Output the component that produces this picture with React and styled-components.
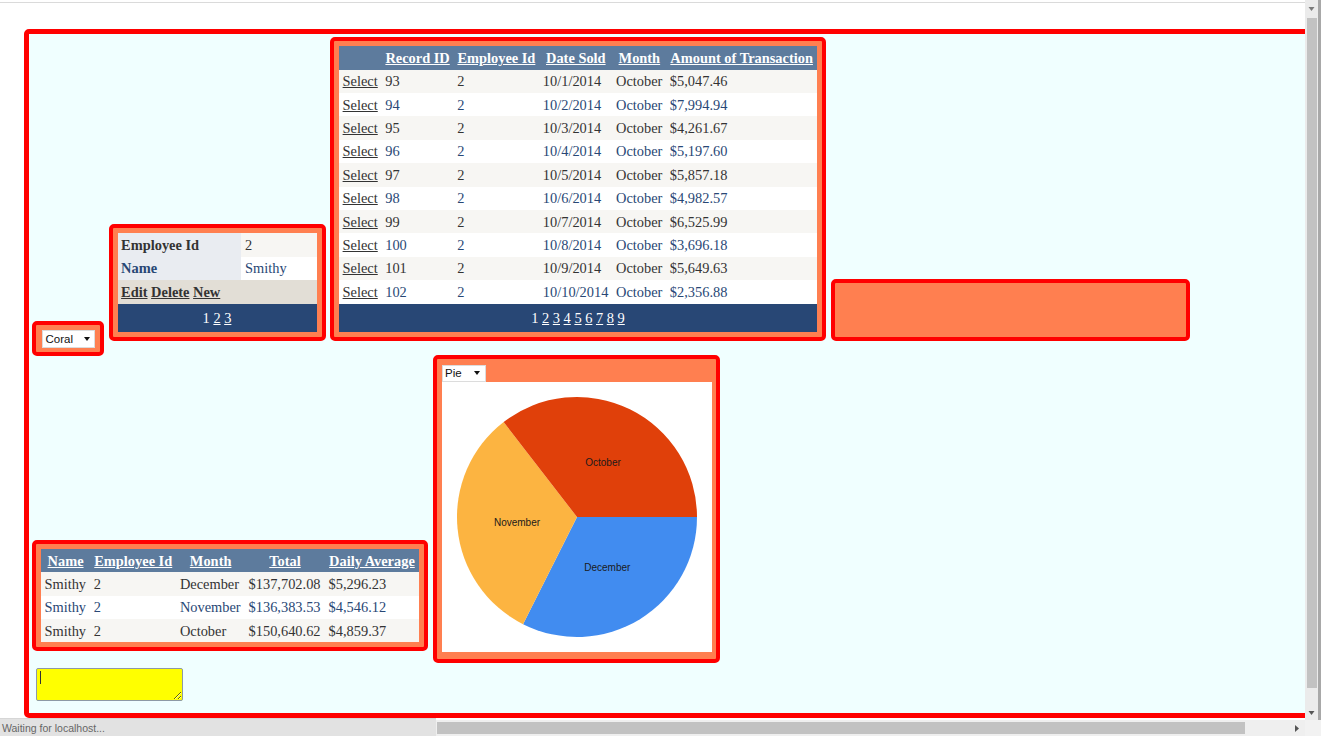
import React from 'react';
import styled, { createGlobalStyle } from 'styled-components';

const GlobalStyle = createGlobalStyle`
  html, body {
    margin: 0;
    padding: 0;
  }
  body {
    width: 1321px;
    height: 736px;
    overflow: hidden;
    background: #fff;
    font-family: "Liberation Serif", "Times New Roman", serif;
  }
`;

// Browser frame
const Screen = styled.div`
  position: relative;
  width: 1321px;
  height: 736px;
  display: grid;
  grid-template-columns: 1305px 16px;
  grid-template-rows: 720px 16px;
  overflow: hidden;
  background: #fff;
`;

const Viewport = styled.div`
  overflow: hidden;
  background: #fff;
  margin-top: 2px;
  border-top: 1px solid #dadada;
  padding: 25.5px 0 0 23.5px;
`;

const VScroll = styled.div`
  display: flex;
  flex-direction: column;
  background: #ebebeb;
  border-right: 3px solid #a8a8a8;
`;

const HScroll = styled.div`
  display: flex;
  align-items: center;
  background: #efefef;
  padding-left: 437px;
`;

const Corner = styled.div`
  background: #f2f2f2;
`;

const ScrollArrow = styled.div`
  flex-shrink: 0;
  width: ${p => p.$w || 13}px;
  height: ${p => p.$h || 17}px;
  display: flex;
  align-items: center;
  justify-content: center;
`;

const VThumb = styled.div`
  width: 10px;
  height: 670px;
  margin-left: 1.5px;
  margin-top: 1px;
  background: #c2c2c2;
`;

const HThumb = styled.div`
  width: 808px;
  height: 12px;
  background: #c2c2c2;
`;

const Filler = styled.div`
  flex: 1;
`;

const StatusBar = styled.div`
  position: absolute;
  left: 0;
  bottom: 0;
  width: 436px;
  height: 18px;
  box-sizing: border-box;
  background: #e2e2e2;
  border-top: 1px solid #d6d6d6;
  display: flex;
  align-items: center;
  padding-left: 2px;
  font-family: "Liberation Sans", Arial, sans-serif;
  font-size: 10.5px;
  color: #666;
`;

// Page
const Page = styled.div`
  box-sizing: border-box;
  width: 1400px;
  height: 689px;
  border: 5px solid #f00;
  border-radius: 5px;
  background: #f0ffff;
  display: flex;
  flex-direction: column;
  align-items: flex-start;
`;

const Row = styled.div`
  display: flex;
  align-items: flex-end;
  gap: ${p => p.$gap || 4.5}px;
  margin-top: ${p => p.$top}px;
  padding-left: ${p => p.$left}px;
`;

const Panel = styled.div`
  box-sizing: border-box;
  flex-shrink: 0;
  border: 4px solid #f00;
  border-radius: 5px;
  background: #ff7f50;
  padding: 5px;
`;

const ColorPanel = styled(Panel)`
  padding: 4.5px 5.5px;
  margin-bottom: -15px;
`;

const BlankPanel = styled(Panel)`
  width: 359px;
  height: 62px;
`;

const BottomPanel = styled(Panel)`
  margin-bottom: 11.7px;
`;

const ChartPanel = styled(Panel)`
  padding: 6px 4px 7.5px 5px;
`;

const Dropdown = styled.div`
  box-sizing: border-box;
  width: ${p => p.$width}px;
  height: ${p => p.$height}px;
  display: flex;
  align-items: center;
  justify-content: space-between;
  padding: 0 ${p => p.$right}px 0 ${p => p.$left}px;
  background: #fff;
  border: 1px solid #dcdcdc;
  font-family: "Liberation Sans", Arial, sans-serif;
  font-size: 11.5px;
  color: #111;
`;

const ChartBox = styled.div`
  width: 270px;
  height: 270px;
  background: #fff;
`;

// Grid tables
const Grid = styled.table`
  border-collapse: collapse;
  border-spacing: 0;
  font-family: "Liberation Serif", "Times New Roman", serif;
  font-size: 14.4px;
  line-height: 16.2px;
  color: #333;
  white-space: nowrap;
  width: ${p => (p.$width ? `${p.$width}px` : 'auto')};
`;

const HeadRow = styled.tr`
  background: #5d7b9d;
  color: #fff;
  font-weight: bold;
`;

const HeadCell = styled.th`
  padding: 3.6px;
  text-align: center;
  font-weight: bold;
`;

const HeadLink = styled.a`
  color: #fff;
  text-decoration: underline;
`;

const DataRow = styled.tr`
  background: ${p => (p.$alt ? '#fff' : '#f7f6f3')};
  color: ${p => (p.$alt ? '#284775' : '#333')};
`;

const Cell = styled.td`
  padding: 3.6px;
  text-align: left;
`;

const FieldCell = styled.td`
  padding: 3.6px;
  width: 116.8px;
  background: #e9ecf1;
  font-weight: bold;
`;

const RowLink = styled.a`
  color: #333;
  text-decoration: underline;
`;

const CommandRow = styled.tr`
  background: #e2ded6;
  color: #333;
  font-weight: bold;
`;

const PagerRow = styled.tr`
  background: #284775;
  color: #fff;
`;

const PagerCell = styled.td`
  padding: 3.6px;
  text-align: center;
`;

const PageList = styled.div`
  display: inline-flex;
  align-items: center;
  gap: 3.6px;
  height: 21.4px;
  vertical-align: top;
`;

const PageLink = styled.a`
  color: #fff;
  text-decoration: ${p => (p.$current ? 'none' : 'underline')};
`;

// Text box
const MemoWrap = styled.div`
  position: relative;
`;

const Memo = styled.textarea`
  display: block;
  box-sizing: border-box;
  width: 147.3px;
  height: 32.7px;
  margin: 0;
  padding: 2px;
  background: #ff0;
  border: 1px solid #8d9aa6;
  border-radius: 2px;
  resize: both;
  outline: none;
`;

const Caret = styled.span`
  position: absolute;
  left: 4px;
  top: 3px;
  width: 1px;
  height: 13px;
  background: #333;
`;

const transactions = [
  [93, '10/1/2014', '$5,047.46'],
  [94, '10/2/2014', '$7,994.94'],
  [95, '10/3/2014', '$4,261.67'],
  [96, '10/4/2014', '$5,197.60'],
  [97, '10/5/2014', '$5,857.18'],
  [98, '10/6/2014', '$4,982.57'],
  [99, '10/7/2014', '$6,525.99'],
  [100, '10/8/2014', '$3,696.18'],
  [101, '10/9/2014', '$5,649.63'],
  [102, '10/10/2014', '$2,356.88'],
];

const summary = [
  ['December', '$137,702.08', '$5,296.23'],
  ['November', '$136,383.53', '$4,546.12'],
  ['October', '$150,640.62', '$4,859.37'],
];

const DownTri = ({ w = 6, h = 4, color = '#111' }) => (
  <svg width={w} height={h} viewBox="0 0 6 4">
    <polygon points="0,0 6,0 3,4" fill={color} />
  </svg>
);

const Pager = ({ pages }) => (
  <PageList>
    {Array.from({ length: pages }, (_, i) => (
      <PageLink key={i} href="#" $current={i === 0}>{i + 1}</PageLink>
    ))}
  </PageList>
);

const PieChart = () => (
  <svg width="270" height="270" viewBox="0 0 270 270">
    <path d="M135,135 L255,135 A120,120 0 0 1 81.04,242.18 Z" fill="#418cf0" />
    <path d="M135,135 L81.04,242.18 A120,120 0 0 1 61.64,40.03 Z" fill="#fcb441" />
    <path d="M135,135 L61.64,40.03 A120,120 0 0 1 255,135 Z" fill="#e0400a" />
    <g fontFamily='"Liberation Sans", Arial, sans-serif' fontSize="10" fill="#1a1a1a" textAnchor="middle" dominantBaseline="central">
      <text x="161" y="80.6">October</text>
      <text x="75" y="140">November</text>
      <text x="165.3" y="185.6">December</text>
    </g>
  </svg>
);

const App = () => {
  return (
    <Screen>
      <GlobalStyle />
      <Viewport>
        <Page>
          <Row $top={3.8} $left={3.5}>
            <ColorPanel>
              <Dropdown $width={53} $height={18} $left={3} $right={4}>
                Coral <DownTri />
              </Dropdown>
            </ColorPanel>

            <Panel>
              <Grid $width={199}>
                <tbody>
                  <DataRow>
                    <FieldCell>Employee Id</FieldCell>
                    <Cell>2</Cell>
                  </DataRow>
                  <DataRow $alt>
                    <FieldCell>Name</FieldCell>
                    <Cell>Smithy</Cell>
                  </DataRow>
                  <CommandRow>
                    <Cell colSpan={2}>
                      <RowLink href="#">Edit</RowLink> <RowLink href="#">Delete</RowLink> <RowLink href="#">New</RowLink>
                    </Cell>
                  </CommandRow>
                  <PagerRow>
                    <PagerCell colSpan={2}><Pager pages={3} /></PagerCell>
                  </PagerRow>
                </tbody>
              </Grid>
            </Panel>

            <Panel>
              <Grid $width={478}>
                <thead>
                  <HeadRow>
                    <HeadCell>&nbsp;</HeadCell>
                    <HeadCell><HeadLink href="#">Record ID</HeadLink></HeadCell>
                    <HeadCell><HeadLink href="#">Employee Id</HeadLink></HeadCell>
                    <HeadCell><HeadLink href="#">Date Sold</HeadLink></HeadCell>
                    <HeadCell><HeadLink href="#">Month</HeadLink></HeadCell>
                    <HeadCell><HeadLink href="#">Amount of Transaction</HeadLink></HeadCell>
                  </HeadRow>
                </thead>
                <tbody>
                  {transactions.map(([id, date, amount], i) => (
                    <DataRow key={id} $alt={i % 2 === 1}>
                      <Cell><RowLink href="#">Select</RowLink></Cell>
                      <Cell>{id}</Cell>
                      <Cell>2</Cell>
                      <Cell>{date}</Cell>
                      <Cell>October</Cell>
                      <Cell>{amount}</Cell>
                    </DataRow>
                  ))}
                  <PagerRow>
                    <PagerCell colSpan={6}><Pager pages={9} /></PagerCell>
                  </PagerRow>
                </tbody>
              </Grid>
            </Panel>

            <BlankPanel />
          </Row>

          <Row $top={14} $left={3.4} $gap={4.7}>
            <BottomPanel>
              <Grid $width={378}>
                <thead>
                  <HeadRow>
                    <HeadCell><HeadLink href="#">Name</HeadLink></HeadCell>
                    <HeadCell><HeadLink href="#">Employee Id</HeadLink></HeadCell>
                    <HeadCell><HeadLink href="#">Month</HeadLink></HeadCell>
                    <HeadCell><HeadLink href="#">Total</HeadLink></HeadCell>
                    <HeadCell><HeadLink href="#">Daily Average</HeadLink></HeadCell>
                  </HeadRow>
                </thead>
                <tbody>
                  {summary.map(([month, total, avg], i) => (
                    <DataRow key={month} $alt={i % 2 === 1}>
                      <Cell>Smithy</Cell>
                      <Cell>2</Cell>
                      <Cell>{month}</Cell>
                      <Cell>{total}</Cell>
                      <Cell>{avg}</Cell>
                    </DataRow>
                  ))}
                </tbody>
              </Grid>
            </BottomPanel>

            <ChartPanel>
              <Dropdown $width={44} $height={16.5} $left={2.5} $right={5}>
                Pie <DownTri />
              </Dropdown>
              <ChartBox>
                <PieChart />
              </ChartBox>
            </ChartPanel>
          </Row>

          <Row $top={5.3} $left={7.7}>
            <MemoWrap>
              <Memo defaultValue="" />
              <Caret />
            </MemoWrap>
          </Row>
        </Page>
      </Viewport>

      <VScroll>
        <ScrollArrow><DownTri w={7} h={4} color="#7a7a7a" /></ScrollArrow>
        <VThumb />
        <Filler />
        <ScrollArrow $h={14}><DownTri w={7} h={4} color="#555" /></ScrollArrow>
      </VScroll>

      <HScroll>
        <HThumb />
        <Filler />
        <ScrollArrow $w={16} $h={16}>
          <svg width="4" height="7" viewBox="0 0 4 7">
            <polygon points="0,0 4,3.5 0,7" fill="#555" />
          </svg>
        </ScrollArrow>
      </HScroll>
      <Corner />

      <StatusBar>Waiting for localhost...</StatusBar>
    </Screen>
  );
};

export default App;
